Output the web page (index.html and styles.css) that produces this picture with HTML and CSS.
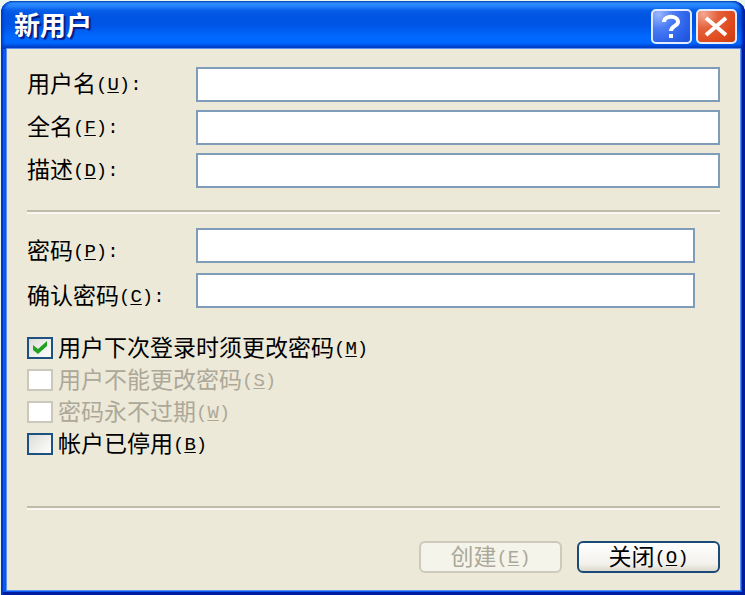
FILE: index.html
```html
<!DOCTYPE html>
<html lang="zh-CN">
<head>
    <meta charset="UTF-8">
    <meta name="viewport" content="width=device-width, initial-scale=1.0">
    <title>新用户</title>
    <link rel="stylesheet" href="styles.css">
</head>
<body>
    <form class="window">
        <div class="titlebar">
            <h1 class="title">新用户</h1>
            <button type="button" class="caption-button help" aria-label="帮助">
                <svg viewBox="0 0 40 34" width="40" height="34">
                    <path d="M13 13C13 6 27 6 27 13C27 17 20 17 20 22" />
                    <path d="M20 25V29" />
                </svg>
            </button>
            <button type="button" class="caption-button close" aria-label="关闭窗口">
                <svg viewBox="0 0 40 34" width="40" height="34">
                    <path d="M10 9L30 26M30 9L10 26" />
                </svg>
            </button>
        </div>
        <div class="content">
            <div class="fields">
                <label for="username">用户名<span class="key">(<u>U</u>):</span></label>
                <input type="text" id="username">
                <label for="fullname">全名<span class="key">(<u>F</u>):</span></label>
                <input type="text" id="fullname">
                <label for="description">描述<span class="key">(<u>D</u>):</span></label>
                <input type="text" id="description">
            </div>
            <hr class="separator">
            <div class="fields passwords">
                <label for="password">密码<span class="key">(<u>P</u>):</span></label>
                <input type="password" id="password">
                <label for="confirm">确认密码<span class="key">(<u>C</u>):</span></label>
                <input type="password" id="confirm">
            </div>
            <div class="options">
                <label class="option"><input type="checkbox" checked><span>用户下次登录时须更改密码<span class="key">(<u>M</u>)</span></span></label>
                <label class="option disabled"><input type="checkbox" disabled><span>用户不能更改密码<span class="key">(<u>S</u>)</span></span></label>
                <label class="option disabled"><input type="checkbox" disabled><span>密码永不过期<span class="key">(<u>W</u>)</span></span></label>
                <label class="option"><input type="checkbox"><span>帐户已停用<span class="key">(<u>B</u>)</span></span></label>
            </div>
            <hr class="separator">
            <div class="actions">
                <button type="submit" class="button" disabled>创建<span class="key">(<u>E</u>)</span></button>
                <button type="button" class="button">关闭<span class="key">(<u>O</u>)</span></button>
            </div>
        </div>
    </form>
</body>
</html>
```

FILE: styles.css
```css
* {
    box-sizing: border-box;
}

body {
    margin: 0;
    padding: 1px 0 0 1px;
    background-color: #e8f6ee;
    color: #000;
    font-family: "Noto Sans CJK SC", sans-serif;
    font-size: 23px;
    line-height: 24px;
}

/* Window frame */
.window {
    padding: 0 5px 5px 6px;
    border-radius: 12px 12px 0 0;
    background-color: #0a5af0;
    box-shadow: inset 2px 0 #0038c8, inset -3px -3px #001ca0;
}

.titlebar {
    display: flex;
    align-items: center;
    gap: 4px;
    height: 48px;
    margin: 0 -5px 0 -6px;
    padding: 2px 8px 0 13px;
    border-radius: 12px 12px 0 0;
    background-image: linear-gradient(to bottom, #0a50b8 0, #2e8cff 2px, #2484fc 5px, #0860ea 9px, #0054e2 14px, #0055e5 24px, #0068ff 36px, #0068ff 42px, #0048d8 45px, #0038b0 48px);
    box-shadow: inset 3px 0 3px -1px #0038c8, inset -4px 0 3px -1px #001ca0;
}

.title {
    flex: 1;
    margin: 0;
    padding-bottom: 4px;
    color: #fff;
    font-size: 26px;
    line-height: 32px;
    text-shadow: 2px 2px 1px #0a1883;
}

.caption-button {
    width: 41px;
    height: 35px;
    padding: 0;
    border: 2px solid #e4edff;
    border-radius: 5px;
    overflow: hidden;
}

.caption-button svg {
    display: block;
    margin: -2px;
    fill: none;
    stroke: #fff;
    stroke-width: 4;
}

.help {
    background: radial-gradient(circle at 15% 10%, #9ab8ff 0, #4a7cf4 35%, #2c62ea 70%, #1c50d8 100%);
}

.close {
    background: radial-gradient(circle at 15% 10%, #f4a890 0, #e4603c 35%, #e04a1c 70%, #c83c10 100%);
}

.content {
    padding: 18px 20px 17px;
    background-color: #ece9d8;
    box-shadow: 0 0 0 1px #5c90f0;
}

.key {
    font-family: "Liberation Mono", monospace;
    font-size: 19px;
    line-height: 16px;
    vertical-align: 2px;
}

.key u {
    text-decoration-thickness: 1px;
    text-underline-offset: 2px;
}

/* Text fields */
.fields {
    display: grid;
    grid-template-columns: 169px 1fr;
    row-gap: 8px;
}

.fields label {
    padding-top: 3px;
}

.fields input {
    width: 100%;
    height: 35px;
    padding: 0 6px;
    border: 2px solid #7f9db9;
    background-color: #fff;
    font: inherit;
}

.passwords {
    row-gap: 10px;
    padding-right: 25px;
}

.passwords label {
    padding-top: 9px;
}

.separator {
    height: 4px;
    margin: 22px 0 14px;
    border: 0;
    border-top: 2px solid #bfbcac;
    border-bottom: 2px solid #f8f7f0;
}

/* Check boxes */
.options {
    display: grid;
    row-gap: 8px;
    margin-top: 28px;
    margin-bottom: 50px;
}

.option {
    display: flex;
    align-items: center;
    gap: 5px;
    width: fit-content;
    height: 24px;
}

.option span {
    padding-bottom: 4px;
}

.option input {
    appearance: none;
    width: 26px;
    height: 22px;
    margin: 0;
    border: 2px solid #1c5180;
    background-image: linear-gradient(135deg, #dcdcd7, #fff);
}

.option input:checked::before {
    content: "";
    display: block;
    width: 22px;
    height: 18px;
    background-color: #21a121;
    clip-path: polygon(4px 6px, 9px 10px, 18px 2px, 18px 7px, 9px 15px, 4px 11px);
}

.option input:disabled {
    border-color: #cac8bb;
    background: #fff;
}

.disabled {
    color: #aca899;
}

/* Dialog buttons */
.actions {
    display: flex;
    justify-content: flex-end;
    gap: 15px;
    margin-top: 31px;
}

.button {
    width: 143px;
    height: 32px;
    padding: 0 0 4px;
    border: 2px solid #1c4a78;
    border-radius: 6px;
    background-image: linear-gradient(to bottom, #fff, #f2f1ec 75%, #dcd8cc);
    color: #000;
    font: inherit;
}

.button:disabled {
    border-color: #cdcabb;
    background: #f5f4ea;
    color: #aca899;
}
```
